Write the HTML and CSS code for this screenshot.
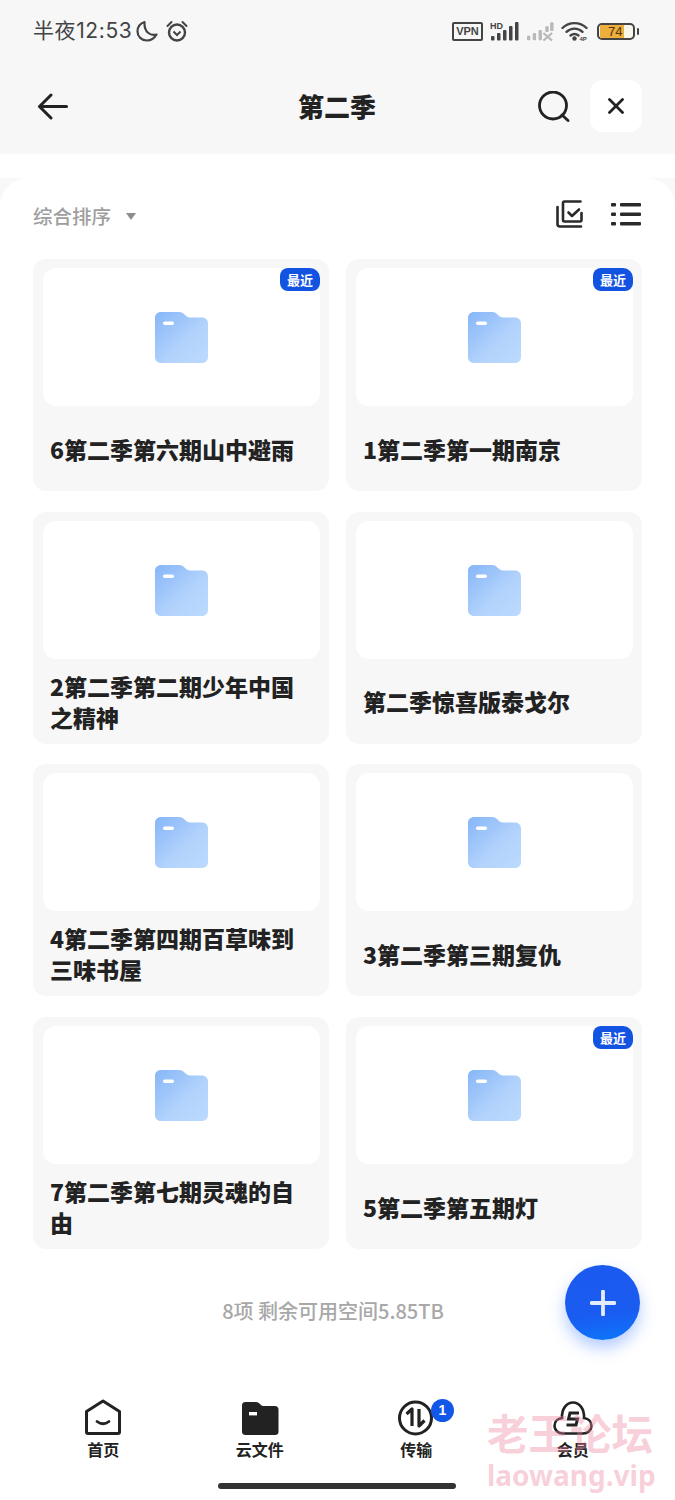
FILE: index.html
```html
<!DOCTYPE html>
<html lang="zh-CN">
<head>
<meta charset="utf-8">
<title>第二季</title>
<link rel="stylesheet" href="styles.css">
</head>
<body>
<svg class="defs" width="0" height="0">
  <defs>
    <linearGradient id="folderfill" x1="0" y1="0" x2="1" y2="1">
      <stop offset="0" stop-color="#86b6f8"/>
      <stop offset="0.6" stop-color="#b3d3fc"/>
      <stop offset="1" stop-color="#bcdafe"/>
    </linearGradient>
    <symbol id="folder" viewBox="0 0 53 51">
      <path d="M6 0H24C27 0 28 1 30 3C31.500 4.500 33 5.500 35 5.500H47C50.500 5.500 53 8 53 11.500V45C53 48.500 50.500 51 47 51H6C2.500 51 0 48.500 0 45V6C0 2.500 2.500 0 6 0Z" fill="url(#folderfill)"/>
      <rect x="8" y="9.500" width="11" height="3.500" rx="1.700" fill="#fff"/>
    </symbol>
  </defs>
</svg>

<div class="page">
  <header class="top">
    <div class="status">
      <div class="status-left">
        <span class="clock">半夜12:53</span>
        <svg class="ic-moon" width="22" height="22" viewBox="0 0 22 22"><path d="M8.500 2C4 3.500 1.500 7.500 1.500 11.500C1.500 16.500 5.500 20.500 11 20.500C15 20.500 18.500 18 20.500 14.500C14.500 16 8 12.500 8.500 2Z" fill="none" stroke="#444" stroke-width="2.200" stroke-linejoin="round"/></svg>
        <svg class="ic-alarm" width="22" height="22" viewBox="0 0 22 22"><circle cx="11" cy="12.500" r="8" fill="none" stroke="#444" stroke-width="2.400"/><path d="M7.500 11.500L11 15L14.500 11.500" fill="none" stroke="#444" stroke-width="2"/><path d="M1.500 6L5.500 2M16.500 2L20.500 6" stroke="#444" stroke-width="2" stroke-linecap="round"/></svg>
      </div>
      <div class="status-right">
        <span class="vpn">VPN</span>
        <svg width="29" height="20" viewBox="0 0 29 20"><text x="0" y="8" class="hd">HD</text><g fill="#444"><rect x="1" y="15" width="3.500" height="4.500" rx="1"/><rect x="7" y="12" width="3.500" height="7.500" rx="1"/><rect x="13" y="9" width="3.500" height="10.500" rx="1"/><rect x="19" y="5" width="3.500" height="14.500" rx="1"/><rect x="25" y="1" width="3.500" height="18.500" rx="1"/></g></svg>
        <svg width="28" height="20" viewBox="0 0 29 20"><g fill="#b9b9b9"><rect x="1" y="15" width="3.500" height="4.500" rx="1"/><rect x="7" y="12" width="3.500" height="7.500" rx="1"/><rect x="13" y="9" width="3.500" height="10.500" rx="1"/><rect x="20" y="5" width="3.500" height="6" rx="1"/><rect x="25" y="1" width="3.500" height="9" rx="1"/></g><path d="M18 12L27 20M27 12L18 20" stroke="#b9b9b9" stroke-width="2.200"/></svg>
        <svg width="27" height="20" viewBox="0 0 27 20"><g fill="none" stroke="#444" stroke-width="2.400" stroke-linecap="round"><path d="M1.500 7C8 0.500 19 0.500 25.500 7"/><path d="M5.500 10.800C10 6.500 17 6.500 21.500 10.800"/><path d="M9.500 14.500C12 12.500 15 12.500 17.500 14.500"/></g><circle cx="13.500" cy="17.500" r="2.200" fill="#444"/><text x="18.500" y="20" class="wifi-tag">4P</text></svg>
        <div class="battery">
          <div class="battery-body"><span class="battery-fill"></span><span class="battery-num">74</span></div>
          <span class="battery-tip"></span>
        </div>
      </div>
    </div>
    <nav class="bar">
      <svg class="back" width="31" height="27" viewBox="0 0 31 27"><path d="M29.500 13.500H2.500M14 2L2.500 13.500L14 25" fill="none" stroke="#222" stroke-width="3" stroke-linecap="round" stroke-linejoin="round"/></svg>
      <h1 class="title">第二季</h1>
      <svg class="search" width="32" height="31" viewBox="0 0 32 31"><circle cx="15" cy="14.500" r="13.500" fill="none" stroke="#222" stroke-width="2.800"/><path d="M24 24L30 29.500" stroke="#222" stroke-width="2.800" stroke-linecap="round"/></svg>
      <button class="close"><svg width="16" height="16" viewBox="0 0 16 16"><path d="M1.500 1.500L14.500 14.500M14.500 1.500L1.500 14.500" stroke="#222" stroke-width="2.800" stroke-linecap="round"/></svg></button>
    </nav>
  </header>

  <div class="band"></div>

  <main class="sheet-wrap">
    <div class="sheet">
      <div class="sort">
        <div class="sort-label">综合排序<i class="caret"></i></div>
        <div class="sort-icons">
          <svg width="27" height="28" viewBox="0 0 27 28"><g fill="none" stroke="#2a2a2a" stroke-width="2.600" stroke-linecap="round" stroke-linejoin="round"><path d="M1.500 7V24C1.500 25.500 2.500 26.500 4 26.500H25"/><path d="M24.500 1.500H8.500C7.500 1.500 7 2 7 3V20C7 21 7.500 21.500 8.500 21.500H24C25 21.500 25.500 21 25.500 20V13"/><path d="M12.500 12.500L16 16L23 9.500"/></g></svg>
          <svg width="30" height="24" viewBox="0 0 30 24"><g fill="#2a2a2a"><rect x="0" y="1" width="5" height="3.400" rx="1"/><rect x="0" y="10.500" width="5" height="3.400" rx="1"/><rect x="0" y="20" width="5" height="3.400" rx="1"/><rect x="9" y="1" width="21" height="3.400" rx="1"/><rect x="9" y="10.500" width="21" height="3.400" rx="1"/><rect x="9" y="20" width="21" height="3.400" rx="1"/></g></svg>
        </div>
      </div>

      <div class="grid">
        <article class="card">
          <div class="thumb"><svg class="folder"><use href="#folder"/></svg><span class="tag">最近</span></div>
          <div class="name"><span>6第二季第六期山中避雨</span></div>
        </article>
        <article class="card">
          <div class="thumb"><svg class="folder"><use href="#folder"/></svg><span class="tag">最近</span></div>
          <div class="name"><span>1第二季第一期南京</span></div>
        </article>
        <article class="card">
          <div class="thumb"><svg class="folder"><use href="#folder"/></svg></div>
          <div class="name"><span>2第二季第二期少年中国之精神</span></div>
        </article>
        <article class="card">
          <div class="thumb"><svg class="folder"><use href="#folder"/></svg></div>
          <div class="name"><span>第二季惊喜版泰戈尔</span></div>
        </article>
        <article class="card">
          <div class="thumb"><svg class="folder"><use href="#folder"/></svg></div>
          <div class="name"><span>4第二季第四期百草味到三味书屋</span></div>
        </article>
        <article class="card">
          <div class="thumb"><svg class="folder"><use href="#folder"/></svg></div>
          <div class="name"><span>3第二季第三期复仇</span></div>
        </article>
        <article class="card">
          <div class="thumb"><svg class="folder"><use href="#folder"/></svg></div>
          <div class="name"><span>7第二季第七期灵魂的自由</span></div>
        </article>
        <article class="card">
          <div class="thumb"><svg class="folder"><use href="#folder"/></svg><span class="tag">最近</span></div>
          <div class="name"><span>5第二季第五期灯</span></div>
        </article>
      </div>

      <p class="count">8项 剩余可用空间5.85TB</p>

      <footer class="tabs">
        <div class="tab">
          <svg width="38" height="37" viewBox="0 0 38 37"><path d="M19 2L2.500 12.500V33C2.500 34 3 34.500 4 34.500H34C35 34.500 35.500 34 35.500 33V12.500Z" fill="none" stroke="#222" stroke-width="3" stroke-linejoin="round"/><path d="M13 22.500Q19 27 25 22.500" fill="none" stroke="#222" stroke-width="2.800" stroke-linecap="round"/></svg>
          <span>首页</span>
        </div>
        <div class="tab">
          <svg width="38" height="37" viewBox="0 0 38 37"><path d="M4.500 3H15C17 3 18 4 19.500 5.500C20.500 6.500 21.500 7 23 7H34C36 7 37.500 8.500 37.500 10.500V33C37.500 35 36 36 34 36H4.500C2.500 36 1 35 1 33V6C1 4 2.500 3 4.500 3Z" fill="#222"/><rect x="8" y="13" width="8" height="3.400" fill="#fff"/></svg>
          <span>云文件</span>
        </div>
        <div class="tab">
          <svg width="38" height="37" viewBox="0 0 38 37"><circle cx="18.500" cy="19" r="16" fill="none" stroke="#222" stroke-width="3"/><path d="M9.500 15L15 10V27M22 10V27L27.500 21.500" fill="none" stroke="#222" stroke-width="3.200" stroke-linejoin="round"/></svg>
          <span>传输</span>
          <b class="dot">1</b>
        </div>
        <div class="tab">
          <svg width="40" height="37" viewBox="0 0 40 37"><path d="M10 34.500H30C35 34.500 38.500 31 38.500 27C38.500 22.500 35 19.500 31 19C31.500 10 26.500 3.500 20 3.500C13.500 3.500 8.500 10 9 19C5 19.500 1.500 22.500 1.500 27C1.500 31 5 34.500 10 34.500Z" fill="none" stroke="#222" stroke-width="2.600"/><path d="M26 14H17L15.500 20H24.500L23 26H13.500" fill="none" stroke="#222" stroke-width="3"/></svg>
          <span>会员</span>
        </div>
      </footer>
      <div class="home-bar"></div>
    </div>
  </main>

  <button class="fab"><svg width="26" height="26" viewBox="0 0 26 26"><path d="M13 1.500V24.500M1.500 13H24.500" stroke="#e4edff" stroke-width="3.800" stroke-linecap="round"/></svg></button>
  <div class="mark"><div class="mark-cn">老王论坛</div><div class="mark-en">laowang.vip</div></div>
</div>
</body>
</html>
```

FILE: styles.css
```css
* { box-sizing: border-box; }
html, body { margin: 0; padding: 0; }
body {
  background: #fff;
  color: #222;
  font-family: "Noto Sans CJK SC", "Noto Sans", sans-serif;
}
.defs { position: absolute; }
.page { position: relative; width: 675px; height: 1500px; overflow: hidden; background: #fff; }

/* top area */
.top { height: 154px; background: #f7f7f7; padding: 20px 33px 0 33px; }
.status { display: flex; justify-content: space-between; align-items: center; height: 22px; }
.status-left { display: flex; align-items: center; }
.clock { font-family: Inter, "Noto Sans CJK SC", sans-serif; font-size: 21px; line-height: 22px; letter-spacing: 0.6px; color: #444; }
.ic-moon { margin-left: 4px; }
.ic-alarm { margin-left: 8px; }
.status-right { display: flex; align-items: center; gap: 7px; margin-right: 3px; }
.vpn {
  width: 31px; height: 19px;
  border: 2px solid #444; border-radius: 2px;
  font: bold 11px/15px "Liberation Sans", sans-serif;
  color: #444; text-align: center;
}
.hd { font: bold 9px "Liberation Sans", sans-serif; fill: #444; }
.wifi-tag { font: bold 6px "Liberation Sans", sans-serif; fill: #444; }
.battery { display: flex; align-items: center; gap: 2px; margin-left: 2px; }
.battery-body { position: relative; width: 38px; height: 17px; border: 2px solid #444; border-radius: 5px; overflow: hidden; background: #fbf6ea; }
.battery-fill { display: block; width: 72%; height: 100%; margin-left: 1px; background: #eeae3c; }
.battery-num { position: absolute; left: 9px; top: 0; font: 13px/13px "Liberation Sans", sans-serif; color: #4a3410; }
.battery-tip { width: 2px; height: 7px; background: #444; border-radius: 1px; }

.bar { display: flex; align-items: center; height: 52px; margin-top: 38px; }
.back { margin-left: 4px; }
.title { flex: 1; margin: 0; padding-left: 68px; font-size: 26px; line-height: 52px; font-weight: 900; text-align: center; color: #222; }
.search { margin-right: 20px; }
.close { display: flex; align-items: center; justify-content: center; width: 52px; height: 52px; padding: 0; border: 0; border-radius: 13px; background: #fff; }

.band { height: 24px; background: #fff; }
.sheet-wrap { background: #f8f8f8; height: 1322px; }
.sheet { height: 1322px; background: #fff; border-radius: 28px 28px 0 0; padding: 0 33px; }

/* sort row */
.sort { display: flex; justify-content: space-between; align-items: center; height: 30px; position: relative; top: 21px; }
.sort-label { display: flex; align-items: center; font-size: 19.500px; line-height: 30px; font-weight: 500; color: #9e9e9e; padding-top: 4px; }
.caret { width: 0; height: 0; margin-left: 15px; border-left: 5.500px solid transparent; border-right: 5.500px solid transparent; border-top: 7px solid #8e8e8e; }
.sort-icons { display: flex; align-items: center; gap: 28px; margin-right: 1px; }

/* cards */
.grid { display: grid; grid-template-columns: 296px 296px; column-gap: 17px; row-gap: 20.700px; margin-top: 51px; }
.card { display: flex; flex-direction: column; height: 232px; padding: 9px 9px 0 10px; border-radius: 13px; background: #f7f7f8; }
.thumb { position: relative; display: flex; align-items: center; justify-content: center; height: 138px; flex: none; background: #fff; border-radius: 13px; }
.folder { width: 53px; height: 51px; margin-top: 1px; }
.tag {
  position: absolute; top: 0; right: 0;
  width: 40px; height: 23px;
  background: #1353e2; color: #fff;
  border-radius: 8px 10px 8px 8px;
  font-size: 13px; line-height: 23px; font-weight: 700; text-align: center;
}
.name { flex: 1; display: flex; align-items: center; padding: 1px 0 0 7px; }
.name span { display: block; width: 258px; font-size: 23px; line-height: 31px; font-weight: 900; color: #222; }

.count { margin: 48px 0 0 0; height: 28px; font-size: 20px; line-height: 28px; font-weight: 500; color: #a8a8a8; text-align: center; padding-right: 9px; }

/* bottom tabs */
.tabs { display: grid; grid-template-columns: repeat(4, 156.500px); margin: 74px 0 0 -8px; }
.tab { position: relative; display: flex; flex-direction: column; align-items: center; }
.tab span { margin-top: 2px; font-size: 16px; line-height: 22px; font-weight: 700; color: #222; }
.dot {
  position: absolute; left: 93px; top: 0;
  width: 23px; height: 23px; border-radius: 50%;
  background: #1258e8; color: #fff;
  font: bold 14px/23px "Liberation Sans", sans-serif; text-align: center;
}
.home-bar { width: 238px; height: 6px; margin: 23px 0 0 185px; border-radius: 3px; background: #333; }

/* things lying over the page */
.fab {
  position: absolute; left: 565px; top: 1265px;
  display: flex; align-items: center; justify-content: center;
  width: 75px; height: 75px; padding: 0; border: 0; border-radius: 50%;
  background: linear-gradient(172deg, #1c5aef 0%, #1a5bf0 62%, #0c78fb 100%);
  box-shadow: 0 8px 16px rgba(40, 110, 255, 0.35);
}
.mark { position: absolute; left: 487px; top: 1407px; width: 170px; pointer-events: none; color: rgba(238, 130, 155, 0.38); font-weight: 700; }
.mark-cn { font-size: 41.500px; line-height: 50px; white-space: nowrap; }
.mark-en { font-family: "Noto Sans", sans-serif; font-size: 28px; line-height: 34px; margin-top: 1px; white-space: nowrap; }
```
